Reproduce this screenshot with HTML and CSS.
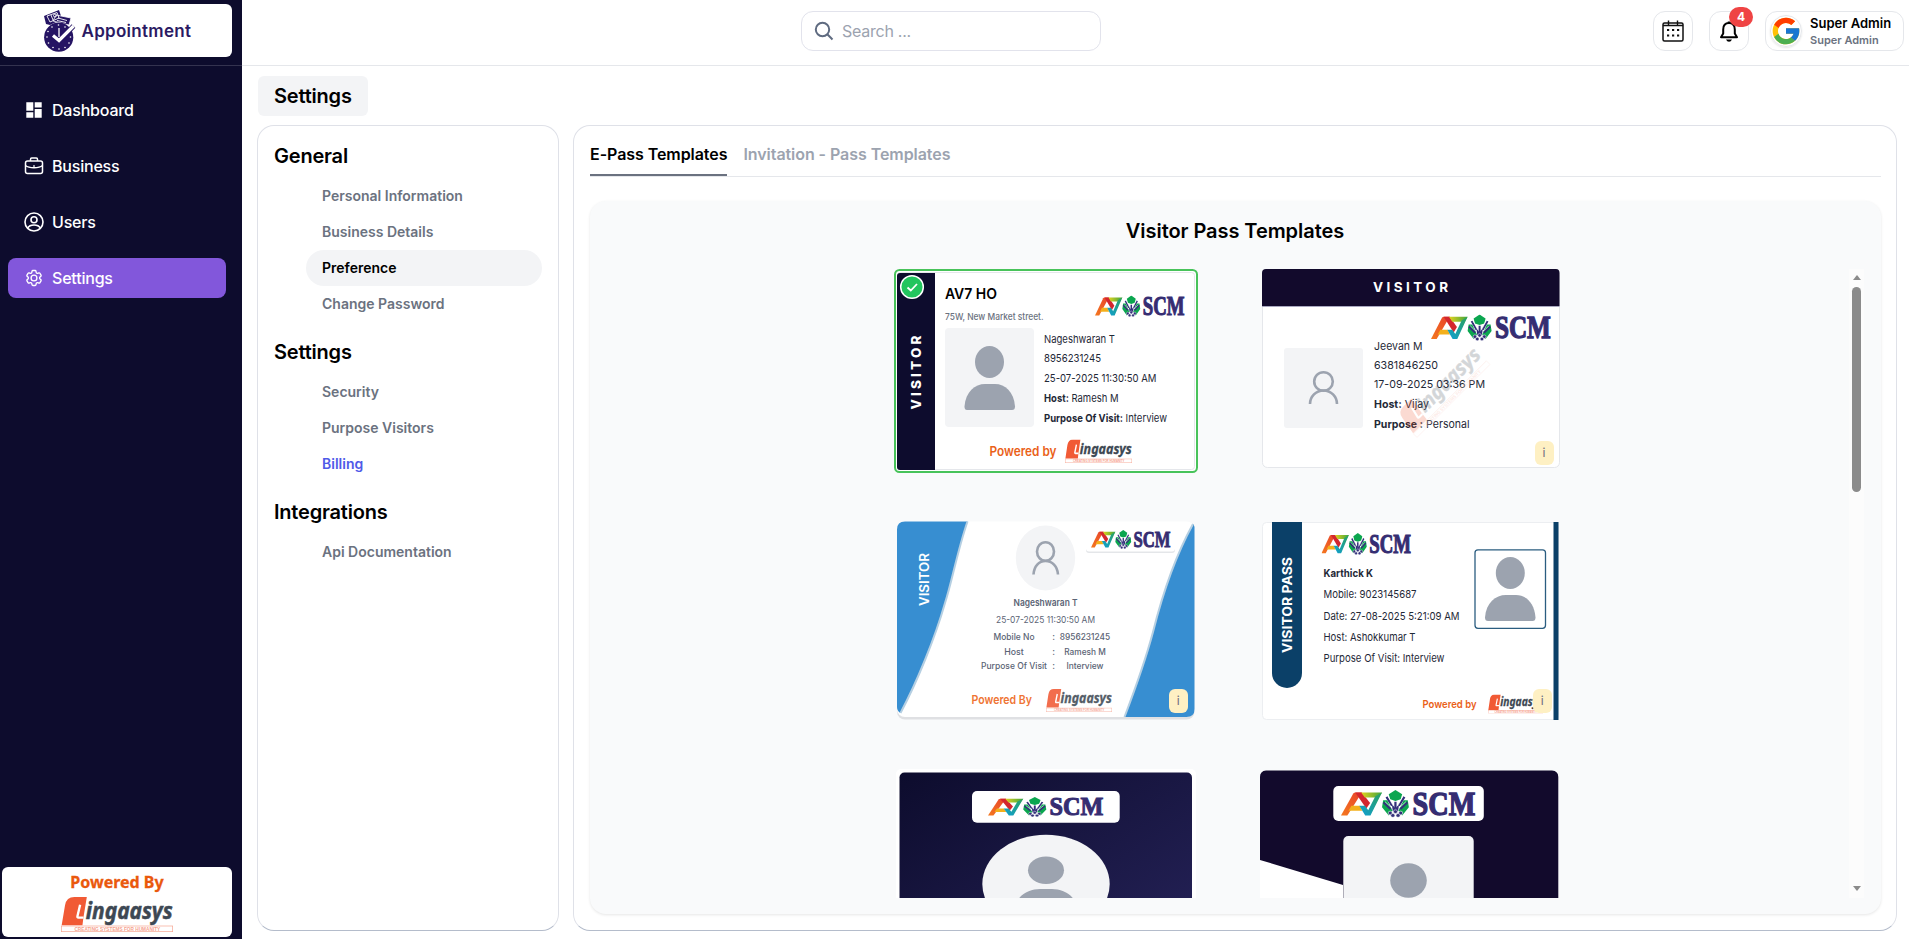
FILE: index.html
```html
<!DOCTYPE html>
<html lang="en">
<head>
<meta charset="utf-8">
<title>Appointment - Settings</title>
<link rel="stylesheet" href="styles.css">
</head>
<body>
<svg class="defs" width="0" height="0" aria-hidden="true">
  <defs>
    <linearGradient id="gOrange" x1="0" y1="1" x2="1" y2="0"><stop offset="0" stop-color="#f4791f"/><stop offset="1" stop-color="#e8412b"/></linearGradient>
    <linearGradient id="gYellow" x1="0" y1="0" x2="1" y2="0"><stop offset="0" stop-color="#e3d21e"/><stop offset="1" stop-color="#3fa63c"/></linearGradient>
    <linearGradient id="gTeal" x1="0" y1="1" x2="1" y2="0"><stop offset="0" stop-color="#0f9fd6"/><stop offset="1" stop-color="#2ba15a"/></linearGradient>
    <linearGradient id="gNavy" x1="0" y1="0" x2="1" y2="1"><stop offset="0" stop-color="#0d0c2d"/><stop offset="1" stop-color="#26235a"/></linearGradient>
    <symbol id="a7" viewBox="0 0 362 80" preserveAspectRatio="none">
      <path d="M0 74 33 10Q35 7 39 7H56L17 74Z" fill="url(#gOrange)"/>
      <path d="M38 7H56L78 38 68 54Z" fill="#d3262e"/>
      <path d="M28 46H50L57 60H20Z" fill="#f3b01c"/>
      <path d="M54 7H110L101 22H64Z" fill="url(#gYellow)"/>
      <path d="M92 18 110 7 79 74H65L49 46H64L73 59Z" fill="url(#gTeal)"/>
      <path d="M146 0 164 12 160 27 146 32 132 27 128 12Z" fill="#0ba64f"/>
      <path d="M113 30 124 30 138 60 128 74 110 50ZM179 30 168 30 154 60 164 74 182 50Z" fill="#0ba64f"/>
      <g fill="none" stroke="#33307a" stroke-width="6">
        <path d="M122 20 137 46M114 36 133 55M170 20 155 46M178 36 159 55M146 34V54"/>
      </g>
      <path d="M136 40 146 54 156 40 153 62H139Z" fill="#33307a"/>
      <path d="M127 20 140 46M165 20 152 46M118 34 134 50M174 34 158 50" stroke="#fff" stroke-width="1.800"/>
      <g fill="#33307a" stroke="#fff" stroke-width="1.500"><circle cx="132" cy="67" r="5.500"/><circle cx="146" cy="63" r="5.500"/><circle cx="160" cy="67" r="5.500"/><circle cx="139" cy="74" r="5.500"/><circle cx="153" cy="74" r="5.500"/></g>
      <text x="192" y="72" class="scm" textLength="168" lengthAdjust="spacingAndGlyphs">SCM</text>
    </symbol>
    <symbol id="ling" viewBox="0 0 334 105" preserveAspectRatio="none">
      <path d="M2 85 12 25Q16 0 40 0H77L67 61L64 85Z" fill="#f15a35"/>
      <path d="M57 23 49 58Q48 62 52 62H67" fill="none" stroke="#fff" stroke-width="7"/>
      <text x="74" y="66" class="ling-name" textLength="259" lengthAdjust="spacingAndGlyphs">ingaasys</text>
      <rect x="1" y="87" width="332" height="17" fill="#fff" stroke="#f6a28e" stroke-width="2"/>
      <text x="40" y="101" class="ling-tag" textLength="256" lengthAdjust="spacingAndGlyphs">CREATING SYSTEMS FOR HUMANITY</text>
    </symbol>
  </defs>
</svg>

<div class="app">
  <aside class="sidebar">
    <div class="brand">
      <div class="brand-box">
        <svg width="150" height="46" viewBox="43 8 150 46">
          <g fill="#251463">
            <path d="M44 16 59 10 62 19 50 25 46 24Z"/><path d="M56 15 71 18 69 25 53 21Z" stroke="#fff" stroke-width=".8"/>
            <circle cx="58.7" cy="37.2" r="14.6"/>
          </g>
          <g stroke="#fff" stroke-width=".9" fill="none"><path d="M47 16 57 12.500 59 18 50 22ZM51 15 53 20M58 18 67 20.500M57 20.500 66 22.500"/><circle cx="55" cy="15.500" r="1.500"/></g>
          <g fill="#fff"><circle cx="58.500" cy="25" r=".8"/><circle cx="52" cy="27" r=".8"/><circle cx="48" cy="31.500" r=".8"/><circle cx="47" cy="37" r=".8"/><circle cx="48.500" cy="43" r=".8"/><circle cx="53" cy="47.500" r=".8"/><circle cx="59" cy="49" r=".8"/><circle cx="65" cy="47.500" r=".8"/><circle cx="69" cy="43" r=".8"/><circle cx="70.500" cy="37" r=".8"/><circle cx="65" cy="27" r=".8"/></g>
          <path d="M59 28V37" stroke="#fff" stroke-width="1.300"/>
          <path d="M53 36 59 41.500 73.500 26" fill="none" stroke="#251463" stroke-width="5"/>
          <path d="M53 35.500 59 40.500 73.500 26" fill="none" stroke="#fff" stroke-width="3.200"/>
          <text x="81.500" y="37" class="brand-name" textLength="109.500">Appointment</text>
        </svg>
      </div>
    </div>
    <nav class="menu">
      <a class="menu-item"><svg viewBox="0 0 20 20"><path fill="#fff" d="M2.300 2.300h7v8.500h-7zM10.700 2.300h7v5.200h-7zM2.300 12.300h7v5.400h-7zM10.700 9h7v8.700h-7z"/></svg>Dashboard</a>
      <a class="menu-item"><svg viewBox="0 0 20 20" fill="none" stroke="#fff" stroke-width="1.500" stroke-linejoin="round"><rect x="1.500" y="5" width="17" height="12.500" rx="2"/><path d="M6.500 5V3.200Q6.500 2 7.700 2h4.600q1.200 0 1.200 1.200V5M1.500 9.500C5 12.500 15 12.500 18.500 9.500"/><circle cx="10" cy="10" r=".5" fill="#fff" stroke-width=".8"/></svg>Business</a>
      <a class="menu-item"><svg viewBox="0 0 20 20" fill="none" stroke="#fff" stroke-width="1.600"><circle cx="10" cy="10" r="9"/><circle cx="10" cy="7.800" r="3"/><path d="M3.800 16C5 13.500 7.500 13 10 13s5 .5 6.200 3"/></svg>Users</a>
      <a class="menu-item active"><svg viewBox="0 0 24 24" fill="none" stroke="#fff" stroke-width="1.600" stroke-linejoin="round"><path d="M9.594 3.940c.090-.542.560-.940 1.110-.940h2.593c.550 0 1.020.398 1.110.940l.213 1.281c.063.374.313.686.645.870.074.040.147.083.220.127.325.196.720.257 1.075.124l1.217-.456a1.125 1.125 0 0 1 1.370.490l1.296 2.247a1.125 1.125 0 0 1-.260 1.431l-1.003.827c-.293.241-.438.613-.430.992a7.723 7.723 0 0 1 0 .255c-.008.378.137.750.430.991l1.004.827c.424.350.534.955.260 1.430l-1.298 2.247a1.125 1.125 0 0 1-1.369.491l-1.217-.456c-.355-.133-.750-.072-1.076.124a6.470 6.470 0 0 1-.220.128c-.331.183-.581.495-.644.869l-.213 1.281c-.090.543-.560.940-1.110.940h-2.594c-.550 0-1.019-.398-1.110-.940l-.213-1.281c-.062-.374-.312-.686-.644-.870a6.520 6.520 0 0 1-.220-.127c-.325-.196-.720-.257-1.076-.124l-1.217.456a1.125 1.125 0 0 1-1.369-.490l-1.297-2.247a1.125 1.125 0 0 1 .260-1.431l1.004-.827c.292-.240.437-.613.430-.991a6.932 6.932 0 0 1 0-.255c.007-.380-.138-.751-.430-.992l-1.004-.827a1.125 1.125 0 0 1-.260-1.430l1.297-2.247a1.125 1.125 0 0 1 1.370-.491l1.216.456c.356.133.751.072 1.076-.124.072-.044.146-.086.220-.128.332-.183.582-.495.644-.869l.214-1.280Z"/><circle cx="12" cy="12" r="3.500"/></svg>Settings</a>
    </nav>
    <div class="powered">
      <div class="powered-title">Powered By</div>
      <svg width="112" height="35"><use href="#ling" width="112" height="35"/></svg>
    </div>
  </aside>

  <div class="page">
    <header class="topbar">
      <div class="search"><svg width="20" height="20" viewBox="0 0 20 20" fill="none" stroke="#5f6b80" stroke-width="2"><circle cx="8.500" cy="8.500" r="6.700"/><path d="M13.300 13.300 18.500 18.500"/></svg><span>Search ...</span></div>
      <div class="actions">
        <div class="icon-btn"><svg width="24" height="24" viewBox="0 0 24 24"><rect x="2" y="4" width="20" height="18" rx="1.500" fill="none" stroke="#111" stroke-width="1.500"/><path d="M7.500 1.500V6M16.500 1.500V6M2 6.500H22" stroke="#111" stroke-width="1.400"/><path d="M6 11h2.200M11 11h2.200M16 11h2.200M6 16.500h2.200M11 16.500h2.200M16 16.500h2.200" stroke="#111" stroke-width="2.200"/></svg></div>
        <div class="icon-btn"><svg width="24" height="24" viewBox="0 0 24 24"><path d="M4 18.200H20L17.800 14.500V10.500C17.800 6.500 15.500 4 12 4S6.200 6.500 6.200 10.500V14.500Z" fill="none" stroke="#000" stroke-width="2" stroke-linejoin="round"/><path d="M12 2.500V4.500" stroke="#000" stroke-width="2.500"/><path d="M9 20.500h6q-1 2.200-3 2.200t-3-2.200Z"/></svg><span class="badge">4</span></div>
        <div class="user">
          <span class="avatar"><svg width="32" height="32" viewBox="0 0 48 48"><path fill="#FFC107" d="M43.600 20H42V20H24v8h11.300C33.700 32.700 29.200 36 24 36c-6.600 0-12-5.400-12-12s5.400-12 12-12c3.100 0 5.800 1.200 8 3l5.700-5.600C34 6 29.300 4 24 4 13 4 4 13 4 24s9 20 20 20 20-9 20-20c0-1.300-.1-2.700-.4-4z"/><path fill="#FF3D00" d="m6.300 14.700 6.600 4.800C14.700 15.100 19 12 24 12c3.100 0 5.800 1.200 8 3l5.700-5.600C34 6 29.300 4 24 4 16.300 4 9.700 8.300 6.300 14.700z"/><path fill="#4CAF50" d="M24 44c5.200 0 9.900-2 13.400-5.200l-6.200-5.200C29.200 35 26.700 36 24 36c-5.200 0-9.600-3.300-11.300-8l-6.500 5C9.500 39.600 16.200 44 24 44z"/><path fill="#1976D2" d="M43.600 20H24v8h11.300c-.8 2.200-2.200 4.200-4.100 5.600l6.200 5.200C37 39.200 44 34 44 24c0-1.300-.1-2.700-.4-4z"/></svg></span>
          <div><div class="user-name">Super Admin</div><div class="user-role">Super Admin</div></div>
        </div>
      </div>
    </header>

    <main class="content">
      <h1 class="page-title">Settings</h1>
      <div class="columns">
        <section class="panel side-panel">
          <h2>General</h2>
          <ul><li>Personal Information</li><li>Business Details</li><li class="selected">Preference</li><li>Change Password</li></ul>
          <h2>Settings</h2>
          <ul><li>Security</li><li>Purpose Visitors</li><li class="billing">Billing</li></ul>
          <h2>Integrations</h2>
          <ul><li>Api Documentation</li></ul>
        </section>

        <section class="panel main-panel">
          <div class="tabs"><div class="tab current">E-Pass Templates</div><div class="tab">Invitation - Pass Templates</div></div>
          <div class="board">
            <h3>Visitor Pass Templates</h3>
            <div class="scroller">
              <div class="grid">

                <svg class="pass" viewBox="894 269 304 204">
                  <rect x="895" y="270" width="302" height="202" rx="4.500" fill="#fff" stroke="#48c35a" stroke-width="2"/>
                  <rect x="897.500" y="272.500" width="297" height="197" rx="3" fill="#fff" stroke="#e5e7eb"/>
                  <path d="M900 273H935V470H900Q897 470 897 467V276Q897 273 900 273Z" fill="#0d0c2d"/>
                  <circle cx="912" cy="287" r="11.300" fill="#22c55e" stroke="#fff" stroke-width="1.500"/>
                  <path d="M907.500 287.500 910.800 290.500 917 284" fill="none" stroke="#fff" stroke-width="1.800"/>
                  <text transform="translate(921.300 409.500) rotate(-90)" class="w8" font-size="13.500" fill="#fff" textLength="74">VISITOR</text>
                  <text x="945" y="298.700" class="w6" font-size="15" fill="#000" textLength="52" lengthAdjust="spacingAndGlyphs">AV7 HO</text>
                  <text x="945" y="319.700" class="w5" font-size="9.500" fill="#6b7280" textLength="98.500" lengthAdjust="spacingAndGlyphs">75W, New Market street.</text>
                  <rect x="945" y="328" width="89" height="99" rx="4" fill="#f3f4f6"/>
                  <ellipse cx="989.500" cy="362" rx="14.500" ry="16" fill="#9ca3af"/>
                  <path d="M967 410Q964.500 410 964.500 406.500C965.500 392 975 384 985 384H995C1005 384 1014 392 1015 406.500Q1015 410 1012 410Z" fill="#9ca3af"/>
                  <use href="#a7" x="1095" y="295.500" width="90" height="21.500"/>
                  <g font-size="11" fill="#1f2937">
                    <text x="1044" y="342.500" textLength="71" lengthAdjust="spacingAndGlyphs">Nageshwaran T</text>
                    <text x="1044" y="362" textLength="57" lengthAdjust="spacingAndGlyphs">8956231245</text>
                    <text x="1044" y="382" textLength="112.500" lengthAdjust="spacingAndGlyphs">25-07-2025 11:30:50 AM</text>
                    <text x="1044" y="402" textLength="74.500" lengthAdjust="spacingAndGlyphs"><tspan class="w7">Host:</tspan> Ramesh M</text>
                    <text x="1044" y="421.700" textLength="123" lengthAdjust="spacingAndGlyphs"><tspan class="w7">Purpose Of Visit:</tspan> Interview</text>
                  </g>
                  <text x="989.500" y="455.700" class="w6" font-size="13" fill="#ea6118" textLength="67" lengthAdjust="spacingAndGlyphs">Powered by</text>
                  <use href="#ling" x="1065" y="439.500" width="67" height="23.500"/>
                </svg>

                <svg class="pass" viewBox="1258 269 304 204">
                  <rect x="1262.500" y="269.500" width="297" height="198" rx="5" fill="#fff" stroke="#e5e7eb"/>
                  <path d="M1266 269H1556Q1559.500 269 1559.500 273V306H1262V273Q1262 269 1266 269Z" fill="#120a2c"/>
                  <path d="M1262 306.500H1559.500" stroke="#a9a8c0"/>
                  <text x="1373" y="292" class="w7" font-size="13.500" fill="#fff" textLength="75">VISITOR</text>
                  <use href="#a7" x="1431" y="314.500" width="120.500" height="26.500"/>
                  <rect x="1284" y="348" width="79" height="80" rx="3" fill="#f3f4f6"/>
                  <g fill="none" stroke="#9ca3af" stroke-width="2.600"><circle cx="1323.500" cy="381.500" r="9.300"/><path d="M1310 404A13.500 13.500 0 0 1 1337 404"/></g>
                  <g font-size="11" fill="#1f2937">
                    <text x="1374" y="350.300" textLength="48.500" lengthAdjust="spacingAndGlyphs">Jeevan M</text>
                    <text x="1374" y="369" textLength="64" lengthAdjust="spacingAndGlyphs">6381846250</text>
                    <text x="1374" y="388" textLength="111" lengthAdjust="spacingAndGlyphs">17-09-2025 03:36 PM</text>
                    <text x="1374" y="408" textLength="55" lengthAdjust="spacingAndGlyphs"><tspan class="w7">Host:</tspan> Vijay</text>
                    <text x="1374" y="428" textLength="95.500" lengthAdjust="spacingAndGlyphs"><tspan class="w7">Purpose :</tspan> Personal</text>
                  </g>
                  <g transform="translate(1417 438) rotate(-45)" opacity=".22"><use href="#ling" x="0" y="-32" width="104" height="32"/></g>
                  <rect x="1535" y="441" width="19" height="24" rx="6" fill="#fef0c3"/>
                  <text x="1542.500" y="457" font-size="12" fill="#6b6a80">i</text>
                </svg>

                <svg class="pass" viewBox="894 519 304 204">
                  <rect x="897" y="523" width="297.500" height="196.500" rx="8" fill="#dfe0e3"/>
                  <rect x="897" y="521.500" width="297.500" height="195.500" rx="8" fill="#fff"/>
                  <path d="M905 521.500H967.500C957 552 952 582 945 603C935 638 917 682 900.500 713Q897 711 897 707V529.500Q897 521.500 905 521.500Z" fill="#378ed1"/>
                  <path d="M967.500 521.500C957 552 952 582 945 603C935 638 917 682 900.500 713" fill="none" stroke="#b5cfe2" stroke-width="2"/>
                  <path d="M1193.500 524C1172 562 1161 600 1153 632C1145 662 1134 692 1124.500 717H1186.500Q1194.500 717 1194.500 709V527Z" fill="#378ed1"/>
                  <path d="M1193 524C1172 562 1161 600 1153 632C1145 662 1134 692 1124.500 717" fill="none" stroke="#b5cfe2" stroke-width="2"/>
                  <text transform="translate(928.700 606) rotate(-90)" class="w6" font-size="13" fill="#fff" textLength="53" lengthAdjust="spacingAndGlyphs">VISITOR</text>
                  <ellipse cx="1045.500" cy="558" rx="29.700" ry="32.600" fill="#f3f4f6"/>
                  <g fill="none" stroke="#9ca3af" stroke-width="2.600"><ellipse cx="1045.500" cy="551.500" rx="8.500" ry="9.300"/><path d="M1033.500 574.500C1034 566 1039 561 1045.500 561S1057.500 566 1058 574.500"/></g>
                  <rect x="1086" y="529" width="89" height="24" rx="3" fill="#e4e6e9"/><rect x="1086" y="527" width="89" height="24.500" rx="3" fill="#fff"/>
                  <use href="#a7" x="1091" y="530" width="80" height="19"/>
                  <g fill="#5b6475" font-size="9.500" text-anchor="middle">
                    <text x="1045.500" y="605.700" class="w6" textLength="64" lengthAdjust="spacingAndGlyphs">Nageshwaran T</text>
                    <text x="1045.500" y="622.700" textLength="99" lengthAdjust="spacingAndGlyphs">25-07-2025 11:30:50 AM</text>
                    <g font-size="9" class="w5">
                      <text x="1014" y="640" textLength="41" lengthAdjust="spacingAndGlyphs">Mobile No</text><text x="1053.500" y="640">:</text><text x="1085" y="640" textLength="50.500" lengthAdjust="spacingAndGlyphs">8956231245</text>
                      <text x="1014" y="654.500" textLength="19.500" lengthAdjust="spacingAndGlyphs">Host</text><text x="1053.500" y="654.500">:</text><text x="1085" y="654.500" textLength="41.500" lengthAdjust="spacingAndGlyphs">Ramesh M</text>
                      <text x="1014" y="669" textLength="66" lengthAdjust="spacingAndGlyphs">Purpose Of Visit</text><text x="1053.500" y="669">:</text><text x="1085" y="669" textLength="37" lengthAdjust="spacingAndGlyphs">Interview</text>
                    </g>
                  </g>
                  <text x="971.500" y="704" class="w6" font-size="12" fill="#ef7434" textLength="60.500" lengthAdjust="spacingAndGlyphs">Powered By</text>
                  <use href="#ling" x="1046" y="689" width="66" height="23" opacity=".88"/>
                  <rect x="1169" y="689" width="19" height="24" rx="6" fill="#fef0c3"/>
                  <text x="1176.700" y="705" font-size="12" fill="#6b6a80">i</text>
                </svg>

                <svg class="pass" viewBox="1258 519 304 204">
                  <rect x="1262.500" y="522.500" width="296" height="197" rx="4" fill="#fff" stroke="#eceef1"/>
                  <path d="M1272 522H1302V673A15 15 0 0 1 1272 673Z" fill="#0b4068"/>
                  <rect x="1553.500" y="522" width="5" height="198" fill="#0b4068"/>
                  <text transform="translate(1291.500 653) rotate(-90)" class="w7" font-size="13" fill="#fff" textLength="96" lengthAdjust="spacingAndGlyphs">VISITOR PASS</text>
                  <use href="#a7" x="1321.500" y="533" width="90" height="22"/>
                  <g font-size="11" fill="#1f2937">
                    <text x="1323.500" y="577" class="w7" textLength="49.500" lengthAdjust="spacingAndGlyphs">Karthick K</text>
                    <text x="1323.500" y="598.400" textLength="93" lengthAdjust="spacingAndGlyphs">Mobile: 9023145687</text>
                    <text x="1323.500" y="619.700" textLength="136" lengthAdjust="spacingAndGlyphs">Date: 27-08-2025 5:21:09 AM</text>
                    <text x="1323.500" y="641" textLength="92" lengthAdjust="spacingAndGlyphs">Host: Ashokkumar T</text>
                    <text x="1323.500" y="662.300" textLength="121" lengthAdjust="spacingAndGlyphs">Purpose Of Visit: Interview</text>
                  </g>
                  <rect x="1475" y="549.800" width="70.500" height="78.500" rx="3" fill="#fff" stroke="#2b5d80" stroke-width="1.300"/>
                  <ellipse cx="1510.300" cy="573" rx="14.500" ry="16" fill="#9ca3af"/>
                  <path d="M1488 621Q1485 621 1485 617.500C1486 603 1495.500 595 1506 595H1516C1526 595 1534.500 603 1535.500 617.500Q1535.500 621 1532.500 621Z" fill="#9ca3af"/>
                  <text x="1422.500" y="708" class="w6" font-size="11" fill="#ea6118" textLength="54" lengthAdjust="spacingAndGlyphs">Powered by</text>
                  <use href="#ling" x="1488" y="694.500" width="55" height="19"/>
                  <rect x="1533" y="689" width="19" height="24" rx="6" fill="#fef0c3"/>
                  <text x="1540.700" y="705" font-size="12" fill="#6b6a80">i</text>
                </svg>

                <svg class="pass" viewBox="894 769 304 204">
                  <rect x="896" y="769" width="300" height="204" rx="5" fill="#fff"/>
                  <rect x="899.500" y="772.500" width="292.500" height="197" rx="5" fill="url(#gNavy)"/>
                  <rect x="972" y="791" width="147.700" height="31.700" rx="5" fill="#fff"/>
                  <use href="#a7" x="988" y="797" width="116" height="20"/>
                  <ellipse cx="1046" cy="884" rx="63.700" ry="49.200" fill="#f3f4f6"/>
                  <ellipse cx="1046" cy="870.300" rx="18" ry="13.700" fill="#9ca3af"/>
                  <path d="M1014 912C1015 896 1028 889 1040 889H1052C1064 889 1077 896 1078 912Z" fill="#9ca3af"/>
                </svg>

                <svg class="pass" viewBox="1258 769 304 204">
                  <path d="M1266 770.500H1552Q1558.300 771 1558.300 777V973H1260V777Q1260 771 1266 770.500Z" fill="#120a2c"/>
                  <path d="M1260 860 1343 885V973H1260Z" fill="#fff"/>
                  <rect x="1333.300" y="786" width="150.500" height="35" rx="5" fill="#fff"/>
                  <use href="#a7" x="1341" y="790" width="135" height="27.500"/>
                  <rect x="1343.300" y="836" width="130.400" height="130" rx="5" fill="#f3f4f6"/>
                  <ellipse cx="1408.500" cy="880.500" rx="18.300" ry="17.200" fill="#9ca3af"/>
                </svg>

              </div>
              <div class="bar"><span class="up"></span><span class="thumb"></span><span class="down"></span></div>
            </div>
          </div>
        </section>
      </div>
    </main>
  </div>
</div>
</body>
</html>
```

FILE: styles.css
```css
* { box-sizing: border-box; }
body { margin: 0; font-family: Inter, "Liberation Sans", sans-serif; color: #000; background: #fff; }
h1, h2, h3, ul { margin: 0; padding: 0; font-weight: 600; }
.defs { position: absolute; }
.app { display: flex; width: 1909px; height: 939px; overflow: hidden; }

.sidebar { width: 242px; flex: none; background: #0d0c2d; display: flex; flex-direction: column; }
.brand { height: 66px; padding: 4px 10px 0 2px; border-bottom: 1px solid #34334f; }
.brand-box { height: 53px; background: #fff; border-radius: 6px; padding: 4px 0 0 41px; }
.brand-box svg { display: block; }
.brand-name { font: 600 17px Inter, sans-serif; fill: #2b1a63; }
.menu { padding: 24px 16px 0 8px; display: flex; flex-direction: column; gap: 16px; flex: 1; }
.menu-item { height: 40px; display: flex; align-items: center; gap: 8px; padding-left: 16px; color: #fff; font-size: 16px; font-weight: 500; letter-spacing: -.2px; border-radius: 8px; }
.menu-item svg { width: 20px; height: 20px; }
.menu-item.active { background: #8257db; }
.powered { margin: 0 10px 2px 2px; height: 70px; background: #fff; border-radius: 6px; display: flex; flex-direction: column; align-items: center; padding: 5px 0 0; }
.powered-title { font: 700 16px/21px "Noto Sans", sans-serif; -webkit-text-stroke: .3px #ea580c; color: #ea580c; margin-bottom: 4px; }
.powered svg { display: block; }

.page { flex: 1; display: flex; flex-direction: column; }
.topbar { height: 66px; border-bottom: 1px solid #e5e7eb; display: flex; padding: 11px 5px 0 559px; justify-content: space-between; }
.search { width: 300px; height: 40px; border: 1px solid #e2e3ec; border-radius: 12px; display: flex; align-items: center; gap: 8px; padding-left: 12px; font-size: 16px; letter-spacing: -.25px; color: #9ca3af; }
.actions { display: flex; gap: 16px; }
.icon-btn { width: 40px; height: 40px; border: 1px solid #e5e7eb; border-radius: 12px; display: flex; align-items: center; justify-content: center; position: relative; }
.badge { position: absolute; top: -5px; left: 19px; width: 24px; height: 20px; border-radius: 10px; background: #ef4444; color: #fff; font-size: 12px; font-weight: 700; line-height: 20px; text-align: center; }
.user { width: 139px; height: 40px; border: 1px solid #e5e7eb; border-radius: 12px; display: flex; align-items: center; gap: 8px; padding-left: 4px; white-space: nowrap; }
.avatar { width: 32px; height: 32px; flex: none; border-radius: 50%; border: 1px solid #e5e7eb; box-shadow: 0 1px 2px rgba(0,0,0,.1); display: flex; align-items: center; justify-content: center; }
.avatar svg { flex: none; }
.user-name { font-size: 13px; font-weight: 600; line-height: 18px; }
.user-role { font-size: 11px; font-weight: 600; line-height: 17px; color: #6b7280; }

.content { padding: 10px 12px 8px 15px; flex: 1; display: flex; flex-direction: column; align-items: flex-start; }
.page-title { margin-left: 1px; width: 110px; height: 40px; line-height: 40px; padding-left: 16px; font-size: 20px; letter-spacing: -.2px; background: #f3f4f6; border-radius: 6px; margin-bottom: 9px; }
.columns { display: flex; gap: 14px; flex: 1; width: 100%; }
.panel { border: 1px solid #dfe1e8; border-bottom-color: #b4bccb; border-radius: 17px; }
.side-panel { width: 302px; padding: 16px 16px 0 16px; }
.side-panel h2 { font-size: 20px; line-height: 28px; letter-spacing: -.2px; margin-bottom: 8px; }
.side-panel ul { list-style: none; padding-left: 32px; margin-bottom: 16px; }
.side-panel li { height: 36px; line-height: 36px; padding-left: 16px; border-radius: 18px; font-size: 14px; font-weight: 600; color: #6b7280; }
.side-panel li.selected { background: #f3f4f6; color: #000; }
.side-panel li.billing { color: #4f5ae8; }
.main-panel { flex: 1; padding: 10px 15px 16px 16px; display: flex; flex-direction: column; }
.tabs { display: flex; gap: 16px; height: 41px; border-bottom: 1px solid #e5e7eb; }
.tab { font-size: 16px; font-weight: 600; letter-spacing: -.06px; line-height: 37px; color: #9ca3af; height: 40px; }
.tab.current { color: #000; border-bottom: 2px solid #6b7280; }
.board { margin: 24px 0 0; flex: 1; background: #f9fafb; border-radius: 16px; box-shadow: 0 1px 3px rgba(0,0,0,.1); padding: 16px 17px 16px 16px; display: flex; flex-direction: column; }
.board h3 { text-align: center; font-size: 20px; line-height: 28px; letter-spacing: -.06px; margin-bottom: 24px; }
.scroller { height: 629px; overflow: hidden; display: flex; justify-content: space-between; padding-left: 288px; }
.grid { display: grid; grid-template-columns: 304px 304px; gap: 46px 60px; align-content: start; }
.pass { display: block; width: 304px; height: 204px; font-family: Inter, sans-serif; }
.w5 { font-weight: 500; }
.w6 { font-weight: 600; }
.w7 { font-weight: 700; }
.w8 { font-weight: 800; }
.scm { font: 700 98px "Liberation Serif", serif; fill: #352d72; stroke: #352d72; stroke-width: 4px; }
.ling-name { font: italic 700 67px "Noto Sans", sans-serif; fill: #3d4853; stroke: #3d4853; stroke-width: 1.5px; }
.ling-tag { font: 700 15px "Liberation Sans", sans-serif; fill: #f6a28e; }
.bar { width: 15px; background: #fcfcfc; display: flex; flex-direction: column; align-items: center; padding: 6px 0 7px; }
.up, .down { width: 0; height: 0; border: 4.5px solid transparent; border-top: 0; border-bottom: 5px solid #8b8b8b; }
.down { border-bottom: 0; border-top: 5px solid #8b8b8b; margin-top: auto; }
.thumb { width: 9px; height: 205px; margin-top: 7px; border-radius: 5px; background: #8b8b8b; }
```
